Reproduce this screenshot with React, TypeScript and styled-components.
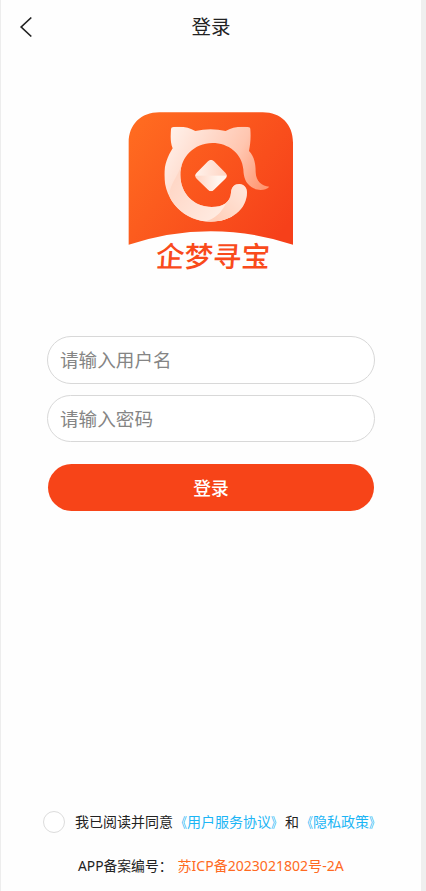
import React, { useState } from "react";
import styled, { createGlobalStyle } from "styled-components";

const GlobalStyle = createGlobalStyle`
  * { box-sizing: border-box; }
  body {
    margin: 0;
    background: #efefef;
    font-family: "Noto Sans", "Noto Sans CJK SC", sans-serif;
  }
`;

const Screen = styled.main`
  width: 421px;
  height: 891px;
  display: flex;
  flex-direction: column;
  align-items: center;
  background: #fefefe;
  border-left: 1px solid #ededed;
  overflow: hidden;
`;

const Header = styled.header`
  width: 100%;
  height: 54px;
  flex: none;
  display: grid;
  grid-template-columns: 54px 1fr 54px;
  align-items: center;
`;

const BackButton = styled.button`
  height: 54px;
  padding: 0 0 0 18px;
  border: 0;
  background: none;
  display: flex;
  align-items: center;
`;

const Title = styled.h1`
  margin: 0 0 2px;
  font: 400 19.5px/28px "Noto Sans CJK SC", sans-serif;
  color: #222;
  text-align: center;
`;

const Brand = styled.div`
  width: 182px;
  height: 182px;
  margin-top: 46px;
  flex: none;
  display: grid;
`;

const LogoArt = styled.svg`
  grid-area: 1 / 1;
  width: 182px;
  height: 182px;
`;

const BrandName = styled.span`
  grid-area: 1 / 1;
  align-self: end;
  justify-self: center;
  margin: 0 0 7px 5px;
  font: 500 28.5px/40px "Noto Sans CJK SC", sans-serif;
  color: #f94a1b;
  transform: skewX(-4deg);
  white-space: nowrap;
`;

const Form = styled.form`
  width: 328px;
  margin-top: 54px;
  display: flex;
  flex-direction: column;
  gap: 11px;
`;

const Field = styled.input`
  width: 100%;
  height: 47.5px;
  padding: 0 12px 2px;
  border: 1.5px solid #d8d8d8;
  border-radius: 24px;
  background: #fff;
  outline: none;
  font: 400 18.6px "Noto Sans CJK SC", sans-serif;
  color: #333;
  &::placeholder { color: #858585; opacity: 1; }
`;

const Submit = styled.button`
  width: 326px;
  height: 47px;
  margin: 11px auto 0;
  padding: 0 0 2px;
  border: 0;
  border-radius: 24px;
  background: #f74418;
  color: #fff;
  font: 500 17.8px "Noto Sans CJK SC", sans-serif;
`;

const Footer = styled.footer`
  width: 100%;
  margin-top: auto;
  padding: 0 0 14px 42px;
  font: 400 14px/22px "Noto Sans CJK SC", sans-serif;
  color: #222;
  white-space: nowrap;
`;

const Agreement = styled.div`
  display: flex;
  align-items: center;
`;

const Consent = styled.span`
  margin-bottom: 1px;
`;

const Radio = styled.button<{ $on: boolean }>`
  width: 22px;
  height: 22px;
  margin-right: 10px;
  padding: 0;
  border: 1.5px solid #dcdcdc;
  border-radius: 50%;
  background: ${(p) => (p.$on ? "#f74418" : "#fff")};
`;

const PolicyLink = styled.span`
  color: #1cb5f5;
`;

const Bracket = styled.span<{ $side: "left" | "right" }>`
  display: inline-block;
  width: 14px;
  transform: scaleX(0.78);
  transform-origin: ${(p) => (p.$side === "left" ? "right" : "left")} center;
`;

const Filing = styled.div`
  margin-top: 22px;
  padding-left: 35px;
  display: flex;
  font-family: "Noto Sans", "Noto Sans CJK SC", sans-serif;
  font-size: 13.8px;
`;

const FilingNumber = styled.span`
  margin-left: 5px;
  font-size: 14.05px;
  color: #ff6a22;
`;

function Policy({ name }: { name: string }) {
  return (
    <PolicyLink>
      <Bracket $side="left">《</Bracket>
      {name}
      <Bracket $side="right">》</Bracket>
    </PolicyLink>
  );
}

function Logo() {
  return (
    <Brand>
      <LogoArt viewBox="0 0 546 546" aria-hidden="true">
        <defs>
          <linearGradient id="tile" x1="0" y1="0.2" x2="1" y2="0.8">
            <stop offset="0" stopColor="#ff6a20" />
            <stop offset="1" stopColor="#f6401a" />
          </linearGradient>
          <linearGradient id="cat" gradientUnits="userSpaceOnUse" x1="145" y1="110" x2="430" y2="260">
            <stop offset="0" stopColor="#fff0e9" />
            <stop offset="0.65" stopColor="#ffc6b0" />
            <stop offset="1" stopColor="#ff9772" />
          </linearGradient>
          <linearGradient id="ring" gradientUnits="userSpaceOnUse" x1="150" y1="240" x2="340" y2="360">
            <stop offset="0" stopColor="#ffd6c5" />
            <stop offset="1" stopColor="#fff0e8" />
          </linearGradient>
          <linearGradient id="paw" gradientUnits="userSpaceOnUse" x1="280" y1="350" x2="370" y2="270">
            <stop offset="0" stopColor="#ffd0bb" />
            <stop offset="1" stopColor="#ffe4d8" />
          </linearGradient>
          <linearGradient id="gemTop">
            <stop offset="0" stopColor="#fff4ee" />
            <stop offset="1" stopColor="#ffd2c0" />
          </linearGradient>
          <linearGradient id="gemBottom">
            <stop offset="0" stopColor="#ffd2c0" />
            <stop offset="0.7" stopColor="#fff5ef" />
          </linearGradient>
          <clipPath id="gem">
            <path d="M264 184Q273 175 282 184L316 218Q325 227 316 236L282 269Q273 278 264 269L230 236Q221 227 230 218Z" />
          </clipPath>
          <clipPath id="body">
            <path d="M158 145C150 124 152 106 153 87Q153 81 161 81C187 78 208 82 226 93Q272 82 317 93C334 82 359 78 383 81Q391 81 391 88C393 112 391 133 387 153C404 171 407 194 407 216C408 245 426 258 448 260C435 273 411 273 394 261C376 249 371 232 370 208C366 160 325 129 277 129C223 129 181 171 181 225C181 279 220 321 275 321C309 321 331 306 333 278C334 261 343 252 358 252C372 252 381 263 381 277C380 330 333 365 272 365C193 365 133 303 133 225C133 195 143 168 158 145Z" />
          </clipPath>
        </defs>
        <path d="M26 434V128C26 73 63 37 118 37H428C483 37 519 73 519 128V434Q272 353 26 434Z" fill="url(#tile)" />
        <g clipPath="url(#body)">
          <rect x="120" y="70" width="340" height="310" fill="url(#cat)" />
          <path d="M184 194C176 227 143 260 149 290L170 375H340V300H220L190 200Z" fill="url(#ring)" />
          <path d="M258 364C303 350 318 315 330 280V248H374L383 262V370Z" fill="url(#paw)" />
        </g>
        <g clipPath="url(#gem)">
          <rect x="220" y="175" width="106" height="53" fill="url(#gemTop)" />
          <rect x="220" y="227" width="106" height="52" fill="url(#gemBottom)" />
        </g>
      </LogoArt>
      <BrandName>企梦寻宝</BrandName>
    </Brand>
  );
}

export default function App() {
  const [agreed, setAgreed] = useState(false);
  return (
    <Screen>
      <GlobalStyle />
      <Header>
        <BackButton aria-label="返回">
          <svg width="14" height="22" viewBox="0 0 14 22" fill="none" stroke="#222" strokeWidth="1.7">
            <path d="M12.3 1.5L2.2 11L12.3 20.5" />
          </svg>
        </BackButton>
        <Title>登录</Title>
      </Header>
      <Logo />
      <Form onSubmit={(e) => e.preventDefault()}>
        <Field placeholder="请输入用户名" />
        <Field type="password" placeholder="请输入密码" />
        <Submit type="submit">登录</Submit>
      </Form>
      <Footer>
        <Agreement>
          <Radio $on={agreed} aria-label="同意" onClick={() => setAgreed(!agreed)} />
          <Consent>
            我已阅读并同意
            <Policy name="用户服务协议" />和<Policy name="隐私政策" />
          </Consent>
        </Agreement>
        <Filing>
          APP备案编号：<FilingNumber>苏ICP备2023021802号-2A</FilingNumber>
        </Filing>
      </Footer>
    </Screen>
  );
}
